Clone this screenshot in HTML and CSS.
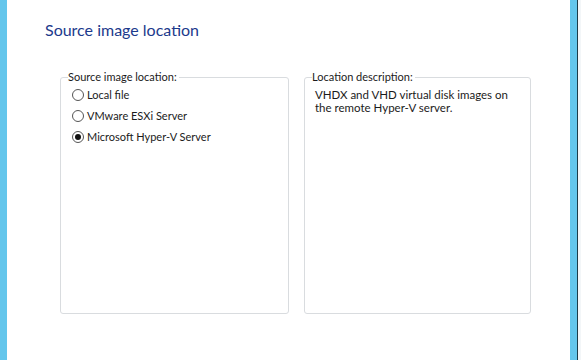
FILE: index.html
```html
<!DOCTYPE html>
<html>
<head>
<meta charset="utf-8">
<link rel="stylesheet" href="styles.css">
</head>
<body>
<div class="frame">
  <div class="edge-left"></div>
  <main class="page">
    <h1 class="title">Source image location</h1>
    <div class="groups">
      <fieldset class="group group-left">
        <legend class="legend">Source image location:</legend>
        <label class="radio"><span class="dot"></span>Local file</label>
        <label class="radio"><span class="dot"></span>VMware ESXi Server</label>
        <label class="radio"><span class="dot checked"></span>Microsoft Hyper-V Server</label>
      </fieldset>
      <fieldset class="group group-right">
        <legend class="legend">Location description:</legend>
        <p class="desc">VHDX and VHD virtual disk images on the remote Hyper-V server.</p>
      </fieldset>
    </div>
  </main>
  <div class="edge-right"></div>
  <div class="edge-line"></div>
  <div class="edge-outer"></div>
</div>
</body>
</html>
```
FILE: styles.css
```css
html, body {
  margin: 0;
  padding: 0;
  background: #ffffff;
}
body {
  font-family: Lato, "Noto Sans", sans-serif;
  font-size: 11px;
  color: #1b1b1b;
}
.frame {
  display: flex;
  width: 581px;
  height: 360px;
}
.edge-left {
  width: 7px;
  background: #64c6ec;
}
.page {
  flex: 1;
  padding: 17px 0 0 38px;
  box-sizing: border-box;
}
.edge-right {
  width: 7px;
  background: #64c6ec;
}
.edge-line {
  width: 1px;
  background: #1d3b48;
}
.edge-outer {
  width: 3px;
  background: #f3f6f8;
}
.title {
  margin: 0;
  font-weight: normal;
  font-size: 16px;
  line-height: 26px;
  color: #1c3a8c;
}
.groups {
  display: grid;
  grid-template-columns: 229px 227px;
  column-gap: 15px;
  margin: 27px 0 0 15px;
}
.group {
  margin: 0;
  height: 244px;
  box-sizing: border-box;
  border: 1px solid #d9dcdf;
  border-radius: 3px;
  padding: 0 8px;
  min-width: 0;
}
.legend {
  padding: 0 2px 0 0;
  margin-left: -1px;
  line-height: 14px;
  font-size: 11px;
  color: #1b1b1b;
}
.radio {
  display: flex;
  align-items: center;
  height: 21px;
  margin-left: 3px;
  font-size: 11px;
}
.dot {
  width: 12px;
  height: 12px;
  border: 1px solid #555;
  border-radius: 50%;
  margin-right: 3px;
  box-sizing: border-box;
  background: #fff;
  display: inline-flex;
  align-items: center;
  justify-content: center;
  flex: none;
}
.dot.checked::after {
  content: "";
  width: 6px;
  height: 6px;
  border-radius: 50%;
  background: #111;
}
.desc {
  margin: 4px 0 0 2px;
  font-size: 11.5px;
  line-height: 13px;
  width: 205px;
}
```
